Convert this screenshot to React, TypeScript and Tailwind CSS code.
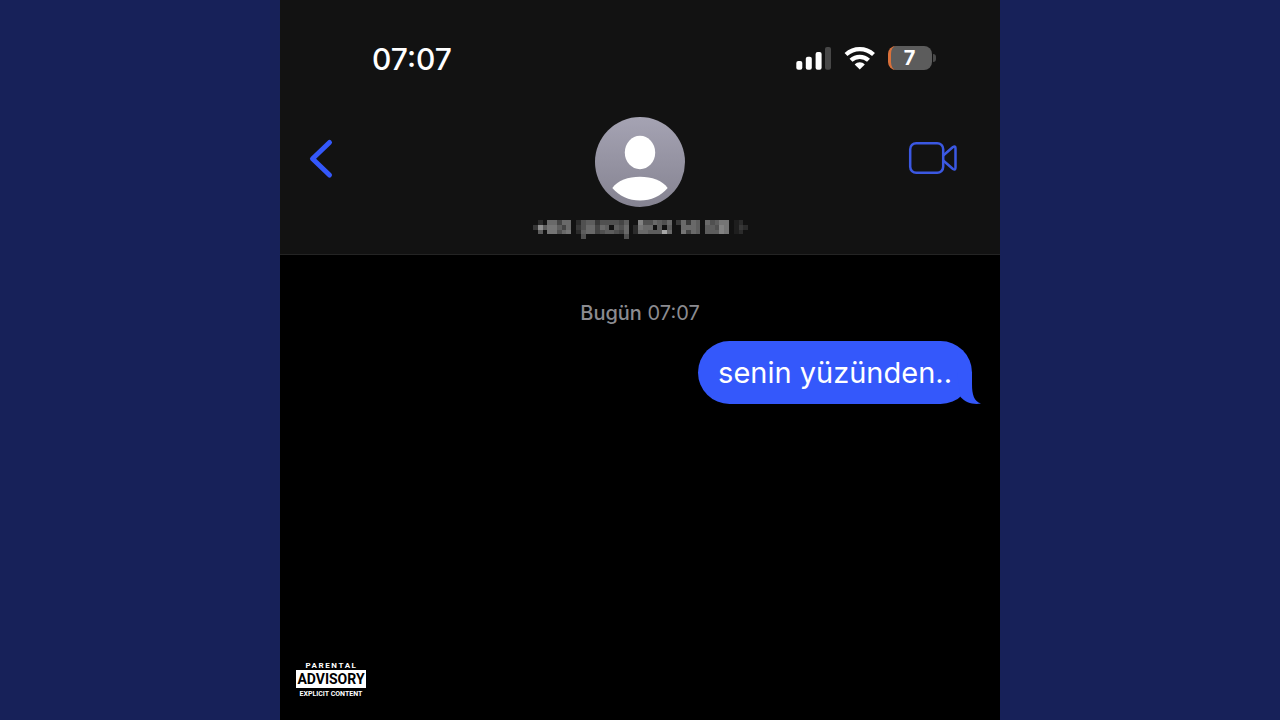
import React from "react";

// brightness of every block in the hidden number, 0 = empty, f = brightest
const numberRows = [
    "020774770256635555460095576570373760756880120",
    "3a6886470357747606570287706060077760665980132",
    "060885780267745665470277666c70084760666980120",
    "000000000050000000050000000000000000000000000",
];

interface BubbleProps {
    text: string;
}

function SignalIcon() {
    return (
        <svg width="36" height="24" viewBox="0 0 36 24" aria-hidden="true">
            <rect x="0.3" y="15" width="6" height="8.7" rx="2" fill="#fff" />
            <rect x="9.8" y="10.7" width="6" height="13" rx="2" fill="#fff" />
            <rect x="19.6" y="6" width="6" height="17.7" rx="2" fill="#fff" />
            <rect x="29" y="1" width="6" height="22.7" rx="2" fill="#474747" />
        </svg>
    );
}

function WifiIcon() {
    return (
        <svg width="32" height="24" viewBox="0 0 32 24" fill="none" aria-hidden="true">
            <path d="M2 8.500C10 1.300 21.500 1.300 29.500 8.500" stroke="#fff" strokeWidth="4.300" />
            <path d="M7 14.300C12 9.600 19.500 9.600 24.500 14.300" stroke="#fff" strokeWidth="4.300" />
            <path d="M15.750 23.600L10.700 18.400C13.700 15.500 17.800 15.500 20.800 18.400Z" fill="#fff" />
        </svg>
    );
}

function BatteryIcon() {
    return (
        <div className="flex items-center gap-px">
            <div className="flex h-6 w-11 items-center justify-center overflow-hidden rounded-lg border-l-3 border-[#d9703a] bg-[#5c5c5c] pr-1 text-xl font-bold text-white">
                7
            </div>
            <div className="h-2 w-[3px] rounded-r-full bg-[#4a4a4a]" />
        </div>
    );
}

function Avatar() {
    return (
        <svg width="90" height="90" viewBox="0 0 90 90" aria-hidden="true">
            <defs>
                <linearGradient id="avatarFill" x1="0" y1="0" x2="0" y2="1">
                    <stop offset="0" stopColor="#a5a3b3" />
                    <stop offset="1" stopColor="#858391" />
                </linearGradient>
            </defs>
            <circle cx="45" cy="45" r="45" fill="url(#avatarFill)" />
            <ellipse cx="45" cy="35.5" rx="15.2" ry="16.7" fill="#fff" />
            <path d="M17.3 71C23 63.500 33 59.800 45 59.800S67 63.500 72.700 71C66 79 56 83.500 45 83.500S24 79 17.300 71Z" fill="#fff" />
        </svg>
    );
}

function HiddenNumber() {
    return (
        <svg width="216" height="20" viewBox="0 0 216 20" shapeRendering="crispEdges" role="img" aria-label="Hidden number">
            {numberRows.map((row, y) =>
                row.split("").map((level, x) =>
                    level === "0" ? null : (
                        <rect key={`${y}-${x}`} x={1 + x * 4.78} y={y * 4.75} width="4.78" height="4.75" fill="#fff" fillOpacity={parseInt(level, 16) / 19} />
                    )
                )
            )}
        </svg>
    );
}

function Bubble({ text }: BubbleProps) {
    return (
        <div className="relative rounded-[32px] bg-[#3458fb] px-5 py-3 text-[29px] leading-[39px] text-white">
            <svg className="absolute -right-[9px] bottom-0" width="36" height="36" viewBox="0 0 36 36" aria-hidden="true">
                <path d="M12 4H27V16C27 27 29 33 36 35.600C28 37 20.500 34.500 15.500 29Z" fill="#3458fb" />
            </svg>
            <span className="relative">{text}</span>
        </div>
    );
}

function Advisory() {
    return (
        <div className="flex w-[70px] flex-col items-center font-[Roboto,'Liberation_Sans',sans-serif] font-bold text-white">
            <span className="pl-px text-[8px] leading-[9px] tracking-[0.2em]">PARENTAL</span>
            <span className="w-full bg-white text-center text-[14px] leading-[18px] text-black">ADVISORY</span>
            <span className="text-[7px] leading-[12px] whitespace-nowrap">EXPLICIT CONTENT</span>
        </div>
    );
}

export default function App() {
    return (
        <div className="flex min-h-screen justify-center bg-[#172159] font-[Inter,'Liberation_Sans',sans-serif]">
            <main className="flex w-full max-w-[100vh] flex-col bg-black">
                <header className="border-b border-[#242424] bg-[#121212] pt-10 pb-[14px]">
                    <div className="flex items-center justify-between pr-16 pl-[92px]">
                        <span className="text-[30px] leading-[38px] font-medium text-white">07:07</span>
                        <div className="flex items-center gap-3 pb-0.5">
                            <SignalIcon />
                            <WifiIcon />
                            <BatteryIcon />
                        </div>
                    </div>
                    <div className="grid grid-cols-3 px-7 pt-[39px]">
                        <button aria-label="Back" className="mt-5 h-11 w-8 justify-self-start">
                            <svg width="28" height="44" viewBox="0 0 28 44" fill="none" aria-hidden="true">
                                <path d="M21.500 5.500L4.500 21.700L21.500 38" stroke="#3458fb" strokeWidth="5" strokeLinecap="round" strokeLinejoin="round" />
                            </svg>
                        </button>
                        <div className="flex flex-col items-center gap-[13px]">
                            <Avatar />
                            <HiddenNumber />
                        </div>
                        <button aria-label="Video call" className="mt-[23px] mr-3 h-9 w-13 justify-self-end">
                            <svg width="52" height="36" viewBox="0 0 52 36" fill="none" stroke="#3b58e2" strokeWidth="2.500" strokeLinejoin="round" aria-hidden="true">
                                <rect x="2.200" y="3.200" width="33" height="29.600" rx="6" />
                                <path d="M35.200 15.500L45 7Q47.500 5.500 47.500 8.500V27.500Q47.500 30.500 45 29L35.200 20.500" />
                            </svg>
                        </button>
                    </div>
                </header>
                <section className="flex flex-1 flex-col pt-11 pr-7">
                    <p className="pl-7 text-center text-xl text-[#8b8b90]">
                        <span className="font-medium">Bugün</span> 07:07
                    </p>
                    <div className="mt-[14px] flex justify-end">
                        <Bubble text="senin yüzünden.." />
                    </div>
                </section>
                <footer className="px-4 pb-5">
                    <Advisory />
                </footer>
            </main>
        </div>
    );
}
